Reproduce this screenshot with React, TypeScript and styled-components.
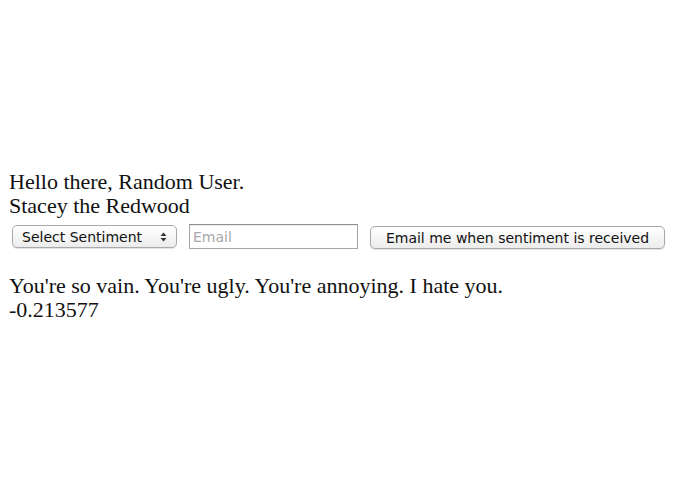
import React from "react";
import styled, { createGlobalStyle } from "styled-components";

const Global = createGlobalStyle`
  html, body { margin: 0; padding: 0; background: #fff; }
  body { font-family: "Liberation Serif", "Times New Roman", serif; color: #111; }
`;

const Page = styled.div`
  padding: 170px 0 0 9px;
  font-size: 22px;
  line-height: 24px;
`;

const Line = styled.div``;

const FormRow = styled.form`
  display: flex;
  align-items: center;
  gap: 12px;
  margin: 5px 0 0 3px;
  height: 27px;
`;

const controlFont = `font-family: "DejaVu Sans", "Lucida Grande", sans-serif; font-size: 14px;`;

const SelectWrap = styled.div`
  position: relative;
  display: inline-flex;
`;

const Select = styled.select`
  appearance: none;
  -webkit-appearance: none;
  ${controlFont}
  color: #111;
  width: 165px;
  height: 23px;
  padding: 0 0 0 9px;
  border: 1px solid #a9a9a9;
  border-radius: 5px;
  background: linear-gradient(#ffffff, #ececec);
  box-shadow: 0 1px 1px rgba(0, 0, 0, 0.12);
  outline: none;
`;

const Arrows = styled.svg`
  position: absolute;
  right: 10px;
  top: 7px;
  pointer-events: none;
`;

const Input = styled.input`
  ${controlFont}
  width: 169px;
  height: 25px;
  box-sizing: border-box;
  padding: 0 0 0 3px;
  border: 1px solid #a6a6a6;
  border-top-color: #8e8e8e;
  box-shadow: inset 0 1px 1px rgba(0, 0, 0, 0.08);
  outline: none;
  &::placeholder { color: #a8a8a8; }
`;

const Button = styled.button`
  ${controlFont}
  color: #111;
  width: 295px;
  height: 23px;
  margin-top: 2px;
  padding: 0;
  border: 1px solid #a9a9a9;
  border-radius: 5px;
  background: linear-gradient(#ffffff, #ececec);
  box-shadow: 0 1px 1px rgba(0, 0, 0, 0.12);
`;

const Result = styled.div`
  margin-top: 24px;
`;

export default function App() {
  return (
    <>
      <Global />
      <Page>
        <Line>Hello there, Random User.</Line>
        <Line>Stacey the Redwood</Line>
        <FormRow onSubmit={(e) => e.preventDefault()}>
          <SelectWrap>
            <Select defaultValue="">
              <option value="">Select Sentiment</option>
              <option value="positive">Positive</option>
              <option value="negative">Negative</option>
            </Select>
            <Arrows width="7" height="10" viewBox="0 0 7 10">
              <path d="M0.5 4 L3.5 0.5 L6.5 4 Z" fill="#333" />
              <path d="M0.5 6 L3.5 9.5 L6.5 6 Z" fill="#333" />
            </Arrows>
          </SelectWrap>
          <Input type="email" placeholder="Email" />
          <Button type="button">Email me when sentiment is received</Button>
        </FormRow>
        <Result>
          <Line>You're so vain. You're ugly. You're annoying. I hate you.</Line>
          <Line>-0.213577</Line>
        </Result>
      </Page>
    </>
  );
}
